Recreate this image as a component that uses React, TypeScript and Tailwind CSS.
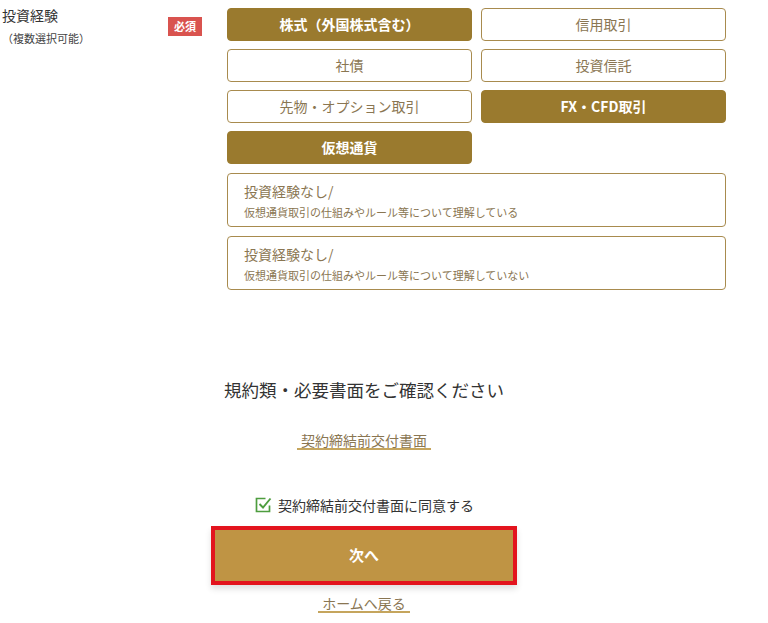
import React from "react";

const font = { fontFamily: '"Noto Sans CJK JP", "Noto Sans", sans-serif' };

const options = [
  { label: "株式（外国株式含む）", on: true },
  { label: "信用取引", on: false },
  { label: "社債", on: false },
  { label: "投資信託", on: false },
  { label: "先物・オプション取引", on: false },
  { label: "FX・CFD取引", on: true },
  { label: "仮想通貨", on: true },
];

const noExp = [
  "仮想通貨取引の仕組みやルール等について理解している",
  "仮想通貨取引の仕組みやルール等について理解していない",
];

function CheckIcon() {
  return (
    <svg width="18" height="18" viewBox="0 0 18 18" fill="none">
      <path d="M11.5 2.5H2.5V15.5H15.5V9.5" stroke="#4e9d3f" strokeWidth="1.7" />
      <path d="M5.5 8L9 11.5L16.5 2.5" stroke="#4e9d3f" strokeWidth="1.9" />
    </svg>
  );
}

export default function App() {
  return (
    <div className="w-[768px] h-[623px] bg-white text-[#333333] overflow-hidden" style={font}>
      <div className="flex pt-[8px]">
        <div className="w-[168px] pl-[2px]">
          <p className="text-[14px] leading-[20px] mt-[-3px]">投資経験</p>
          <p className="text-[11px] leading-[16px] mt-[5px] text-[#444444]">（複数選択可能）</p>
        </div>
        <div className="w-[59px] pt-[4px]">
          <span className="inline-block bg-[#d9534f] text-white text-[11px] font-bold leading-[19px] px-[6px]">
            必須
          </span>
        </div>
        <div className="w-[499px]">
          <div className="grid grid-cols-2 gap-x-[9px] gap-y-[8px]">
            {options.map((o) => (
              <div
                key={o.label}
                className={
                  o.on
                    ? "h-[33px] rounded-[4px] border border-[#9a7a2e] bg-[#9a7a2e] text-white font-bold text-[14px] flex items-center justify-center"
                    : "h-[33px] rounded-[4px] border border-[#a88b4e] bg-white text-[#8a7652] text-[14px] flex items-center justify-center"
                }
              >
                {o.label}
              </div>
            ))}
          </div>
          <div className="flex flex-col gap-[9px] mt-[9px]">
            {noExp.map((t) => (
              <div
                key={t}
                className="h-[54px] rounded-[4px] border border-[#a88b4e] pl-[16px] pt-[8px] text-[#8a7652]"
              >
                <p className="text-[14px] leading-[18px]">投資経験なし/</p>
                <p className="text-[11px] leading-[16px] mt-[4px]">{t}</p>
              </div>
            ))}
          </div>
        </div>
      </div>

      <div className="w-[728px] flex flex-col items-center">
        <h2 className="text-[17.5px] leading-[26px] mt-[87px] text-[#333333]">
          規約類・必要書面をご確認ください
        </h2>
        <a className="mt-[29px] text-[14px] leading-[16px] px-[4px] border-b-2 border-[#c5a55d] text-[#8a7652]">
          契約締結前交付書面
        </a>
        <label className="mt-[45px] flex items-center gap-[6px] h-[20px] text-[14px] text-[#333333]">
          <CheckIcon />
          契約締結前交付書面に同意する
        </label>
        <button className="mt-[11px] w-[306px] h-[59px] border-4 border-[#e3141e] bg-[#bf9444] text-white font-bold text-[15px] shadow-[0_4px_6px_rgba(0,0,0,0.12)]">
          次へ
        </button>
        <a className="mt-[10px] text-[14px] leading-[16px] px-[4px] border-b-2 border-[#c5a55d] text-[#8a7652]">
          ホームへ戻る
        </a>
      </div>
    </div>
  );
}
